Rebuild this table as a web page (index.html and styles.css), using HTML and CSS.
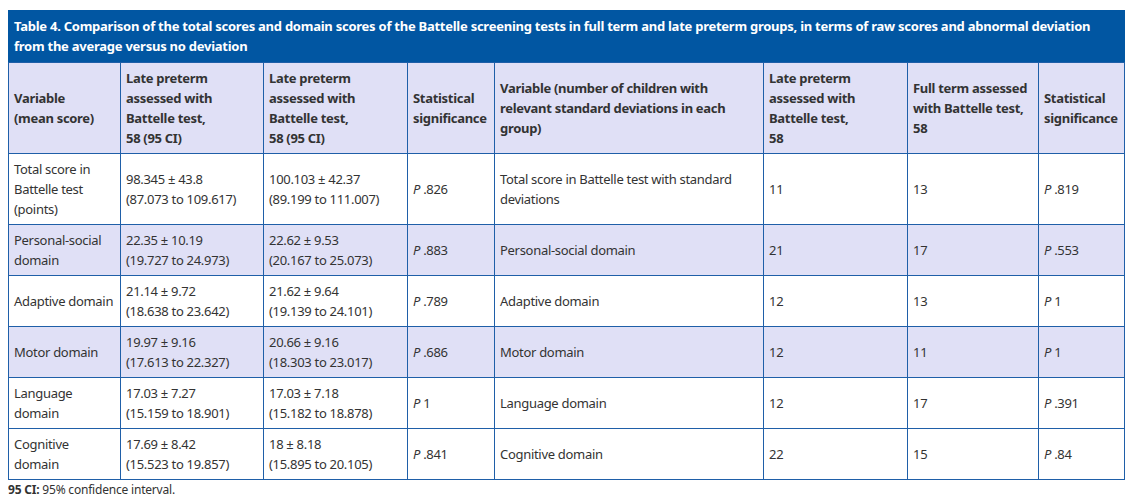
FILE: index.html
```html
<!DOCTYPE html>
<html>
<head>
<meta charset="utf-8">
<link rel="stylesheet" href="styles.css">
</head>
<body>
<div class="wrap">
<table class="data">
<caption class="cap">Table 4. Comparison of the total scores and domain scores of the Battelle screening tests in full term and late preterm groups, in terms of raw scores and abnormal deviation from the average versus no deviation</caption>
<colgroup>
<col class="c1"><col class="c2"><col class="c3"><col class="c4"><col class="c5"><col class="c6"><col class="c7"><col class="c8">
</colgroup>
<thead>
<tr>
<th>Variable<br>(mean score)</th>
<th>Late preterm<br>assessed with<br>Battelle test,<br>58 (95 CI)</th>
<th>Late preterm<br>assessed with<br>Battelle test,<br>58 (95 CI)</th>
<th>Statistical significance</th>
<th>Variable (number of children with relevant standard deviations in each group)</th>
<th>Late preterm<br>assessed with<br>Battelle test,<br>58</th>
<th>Full term assessed with Battelle test, 58</th>
<th>Statistical significance</th>
</tr>
</thead>
<tbody>
<tr>
<td>Total score in Battelle test (points)</td>
<td>98.345 ± 43.8<br>(87.073 to 109.617)</td>
<td>100.103 ± 42.37<br>(89.199 to 111.007)</td>
<td><i>P</i> .826</td>
<td>Total score in Battelle test with standard deviations</td>
<td>11</td>
<td>13</td>
<td><i>P</i> .819</td>
</tr>
<tr class="alt">
<td>Personal-social domain</td>
<td>22.35 ± 10.19<br>(19.727 to 24.973)</td>
<td>22.62 ± 9.53<br>(20.167 to 25.073)</td>
<td><i>P</i> .883</td>
<td>Personal-social domain</td>
<td>21</td>
<td>17</td>
<td><i>P</i> .553</td>
</tr>
<tr>
<td>Adaptive domain</td>
<td>21.14 ± 9.72<br>(18.638 to 23.642)</td>
<td>21.62 ± 9.64<br>(19.139 to 24.101)</td>
<td><i>P</i> .789</td>
<td>Adaptive domain</td>
<td>12</td>
<td>13</td>
<td><i>P</i> 1</td>
</tr>
<tr class="alt">
<td>Motor domain</td>
<td>19.97 ± 9.16<br>(17.613 to 22.327)</td>
<td>20.66 ± 9.16<br>(18.303 to 23.017)</td>
<td><i>P</i> .686</td>
<td>Motor domain</td>
<td>12</td>
<td>11</td>
<td><i>P</i> 1</td>
</tr>
<tr>
<td>Language domain</td>
<td>17.03 ± 7.27<br>(15.159 to 18.901)</td>
<td>17.03 ± 7.18<br>(15.182 to 18.878)</td>
<td><i>P</i> 1</td>
<td>Language domain</td>
<td>12</td>
<td>17</td>
<td><i>P</i> .391</td>
</tr>
<tr>
<td>Cognitive domain</td>
<td>17.69 ± 8.42<br>(15.523 to 19.857)</td>
<td>18 ± 8.18<br>(15.895 to 20.105)</td>
<td><i>P</i> .841</td>
<td>Cognitive domain</td>
<td>22</td>
<td>15</td>
<td><i>P</i> .84</td>
</tr>
</tbody>
</table>
<p class="foot"><b>95 CI:</b> 95% confidence interval.</p>
</div>
</body>
</html>
```
FILE: styles.css
```css
body {
  margin: 8px;
  font-family: "Noto Sans", "Open Sans", sans-serif;
  color: #333;
  background: #fff;
}
.wrap {
  padding-top: 2px;
}
.data {
  border-collapse: collapse;
  table-layout: fixed;
  width: 1117px;
  font-size: 13px;
  line-height: 20px;
  letter-spacing: -0.3px;
}
.cap {
  background: #0156a2;
  color: #fff;
  font-weight: bold;
  text-align: left;
  padding: 6px 4px 6px 6px;
  font-size: 13px;
  line-height: 20px;
  letter-spacing: -0.25px;
}
.c1 { width: 112px; }
.c2 { width: 143px; }
.c3 { width: 144px; }
.c4 { width: 87px; }
.c5 { width: 269px; }
.c6 { width: 144px; }
.c7 { width: 131px; }
.c8 { width: 86px; }
.data th, .data td {
  border: 1px solid #1f5fa8;
  padding: 5px 4px 5px 5px;
  text-align: left;
  vertical-align: middle;
}
.data th {
  background: #e0e0f6;
  font-weight: bold;
}
.data tr.alt td {
  background: #e0e0f6;
}
.data i {
  font-style: italic;
}
.foot {
  margin: 2px 0 0;
  font-size: 12px;
  line-height: 16px;
  letter-spacing: -0.2px;
}
```
